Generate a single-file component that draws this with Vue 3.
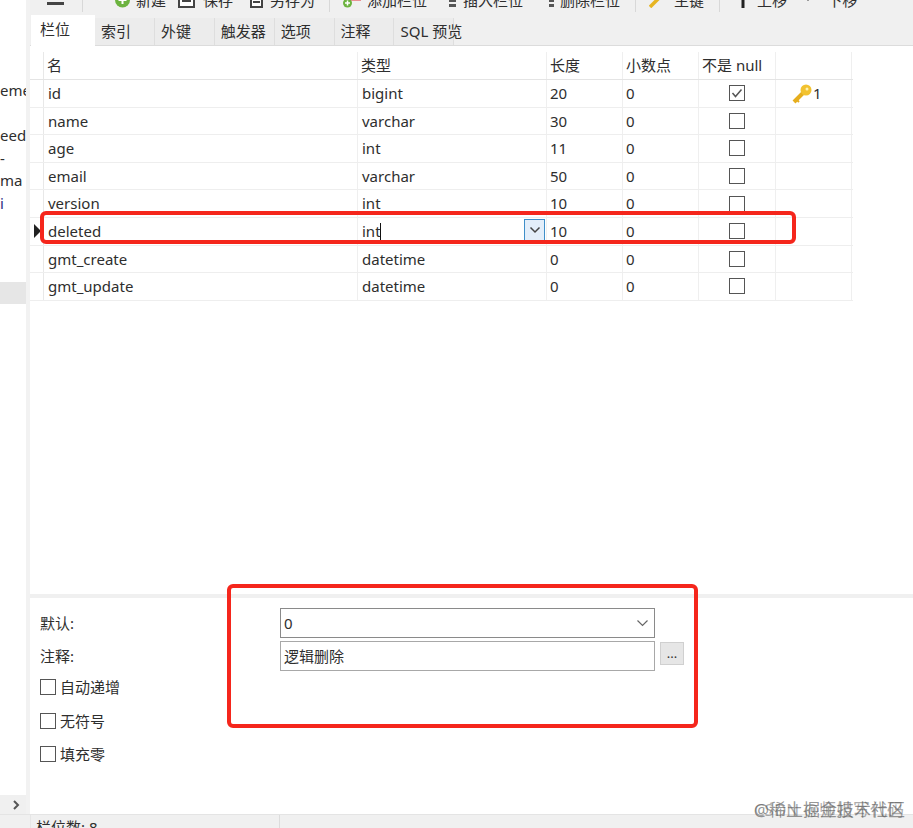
<script setup>
const sideRows = [
  { t: 'eme' }, { t: '' }, { t: 'eed', inset: true }, { t: '-', start: true }, { t: 'ma', inset: true }, { t: 'i', link: true },
  { t: '' }, { t: '' }, { t: '' }, { t: '', sel: true }
]
const tabs = ['索引', '外键', '触发器', '选项', '注释', 'SQL 预览']
const headers = ['名', '类型', '长度', '小数点', '不是 null', '']
const rows = [
  { name: 'id', type: 'bigint', len: '20', dec: '0', nn: true, key: '1' },
  { name: 'name', type: 'varchar', len: '30', dec: '0' },
  { name: 'age', type: 'int', len: '11', dec: '0' },
  { name: 'email', type: 'varchar', len: '50', dec: '0' },
  { name: 'version', type: 'int', len: '10', dec: '0' },
  { name: 'deleted', type: 'int', len: '10', dec: '0', cur: true },
  { name: 'gmt_create', type: 'datetime', len: '0', dec: '0' },
  { name: 'gmt_update', type: 'datetime', len: '0', dec: '0' }
]
const checks = ['自动递增', '无符号', '填充零']
</script>

<template>
  <div class="app">
    <div class="main">
      <aside class="side">
        <div class="side-list">
          <div v-for="(r, i) in sideRows" :key="i" class="side-row" :class="{ sel: r.sel, link: r.link, inset: r.inset, start: r.start }">{{ r.t }}</div>
        </div>
        <div class="side-scroll">
          <svg width="10" height="10" viewBox="0 0 10 10"><path d="M3 1l4 4-4 4" fill="none" stroke="#555" stroke-width="2"/></svg>
        </div>
      </aside>
      <div class="vsplit"></div>
      <section class="content">
        <div class="toolbar">
          <span class="menu-bar"></span>
          <span class="sep s1"></span>
          <span class="tool t-new">
            <svg width="15" height="16" viewBox="0 0 15 16"><circle cx="7.500" cy="8" r="7.500" fill="#6cb33f"/><path d="M7.500 4v8M3.500 8h8" stroke="#fff" stroke-width="2"/></svg>
            新建
          </span>
          <span class="tool t-save">
            <svg width="19" height="16" viewBox="0 0 19 16"><rect x="1" y="1" width="15" height="14" fill="#fff" stroke="#444" stroke-width="2"/><path d="M4 5h9M4 9h9" stroke="#444" stroke-width="2"/></svg>
            保存
          </span>
          <span class="tool t-as">
            <svg width="19" height="16" viewBox="0 0 19 16"><rect x="6" y="1" width="11" height="14" fill="#fff" stroke="#444" stroke-width="2"/><path d="M8 6h7M8 10h7M0 5h4" stroke="#444" stroke-width="2"/></svg>
            另存为
          </span>
          <span class="sep s2"></span>
          <span class="tool t-add">
            <svg width="18" height="16" viewBox="0 0 18 16"><rect x="8" y="5" width="10" height="3.500" fill="#e4313a"/><circle cx="4.500" cy="11" r="4.500" fill="#6cb33f"/><path d="M4.500 8.500v5M2 11h5" stroke="#fff" stroke-width="1.500"/></svg>
            添加栏位
          </span>
          <span class="tool t-ins">
            <svg width="15" height="16" viewBox="0 0 15 16"><circle cx="2" cy="4" r="1.500" fill="#e8a33c"/><rect x="7" y="2" width="7" height="3" fill="#555"/><rect x="7" y="7" width="7" height="3" fill="#555"/><rect x="7" y="12" width="7" height="3" fill="#555"/></svg>
            插入栏位
          </span>
          <span class="tool t-del">
            <svg width="19" height="16" viewBox="0 0 19 16"><circle cx="3" cy="4" r="2" fill="#e4313a"/><rect x="14" y="2" width="6" height="3" fill="#555"/><rect x="14" y="7" width="6" height="3" fill="#555"/><rect x="14" y="12" width="6" height="3" fill="#555"/></svg>
            删除栏位
          </span>
          <span class="sep s3"></span>
          <span class="tool t-key">
            <svg width="19" height="16" viewBox="0 0 19 16"><path d="M1 15L10 6" stroke="#e6b422" stroke-width="3.500"/><circle cx="11" cy="4" r="3.500" fill="#f0c330"/></svg>
            主键
          </span>
          <span class="sep s4"></span>
          <span class="tool t-up">
            <svg width="14" height="16" viewBox="0 0 14 16"><path d="M6 0v16" stroke="#222" stroke-width="3"/><path d="M1 7l5-6 5 6z" fill="#222"/></svg>
            上移
          </span>
          <span class="tool t-down">
            <svg width="19" height="16" viewBox="0 0 19 16"><path d="M6 0v6" stroke="#222" stroke-width="3"/><path d="M1 3l5 6 5-6z" fill="#222"/></svg>
            下移
          </span>
        </div>

        <div class="tabs">
          <div class="tab active">栏位</div>
          <div v-for="t in tabs" :key="t" class="tab">{{ t }}</div>
        </div>

        <div class="grid-pane">
          <div class="table">
            <div class="tr head">
              <div class="ind"></div>
              <div v-for="(h, i) in headers" :key="i" class="td">{{ h }}</div>
            </div>
            <div v-for="r in rows" :key="r.name" class="tr">
              <div class="ind">
                <span v-if="r.cur" class="arrow"></span>
              </div>
              <div class="td lead">{{ r.name }}</div>
              <div class="td lead">
                <span>{{ r.type }}</span><i v-if="r.cur" class="caret"></i>
                <span v-if="r.cur" class="drop">
                  <svg width="12" height="8" viewBox="0 0 12 8"><path d="M1.500 1.500L6 6l4.500-4.500" fill="none" stroke="#444" stroke-width="1.500"/></svg>
                </span>
              </div>
              <div class="td">{{ r.len }}</div>
              <div class="td">{{ r.dec }}</div>
              <div class="td center">
                <span class="box">
                  <svg v-if="r.nn" width="14" height="14" viewBox="0 0 14 14"><path d="M2.500 7l3 3.500 6-7" fill="none" stroke="#555" stroke-width="1.500"/></svg>
                </span>
              </div>
              <div class="td keycell">
                <template v-if="r.key">
                  <svg width="21" height="21" viewBox="0 0 21 21"><path d="M2 19L12 9" stroke="#e6ae1e" stroke-width="4"/><path d="M5 17l2 2" stroke="#e6ae1e" stroke-width="2"/><circle cx="14" cy="7" r="5.500" fill="#f2c230"/><circle cx="15" cy="6" r="1.500" fill="#fff3b0"/></svg>
                  <span>{{ r.key }}</span>
                </template>
              </div>
            </div>
          </div>
        </div>

        <div class="hsplit"></div>

        <div class="form">
          <div class="label">默认:</div>
          <div class="combo">
            <span>0</span>
            <svg width="11" height="7" viewBox="0 0 11 7"><path d="M.5.5l5 5 5-5" fill="none" stroke="#666" stroke-width="1.200"/></svg>
          </div>
          <div></div>
          <div class="label">注释:</div>
          <div class="combo plain"><span>逻辑删除</span></div>
          <button class="more">...</button>
          <div class="checks">
            <label v-for="c in checks" :key="c" class="check"><span class="box"></span>{{ c }}</label>
          </div>
        </div>
      </section>
    </div>
    <footer class="status"><div class="status-cell">栏位数: 8</div></footer>

    <div class="red red-a"></div>
    <div class="red red-b"></div>
    <div class="mark">@稀土掘金技术社区</div>
    <div class="mark mark2">CSDN @师姐写代码</div>
  </div>
</template>

<style scoped>
.app {
  position: relative;
  width: 913px;
  height: 828px;
  overflow: hidden;
  display: flex;
  flex-direction: column;
  background: #fff;
  color: #2e2e2e;
  font: 15px/20px "Noto Sans", "Noto Sans CJK SC", sans-serif;
}
.main { flex: 1; display: flex; min-height: 0; }
.side { width: 26px; display: flex; flex-direction: column; flex: none; overflow: hidden; }
.side-list { flex: 1; padding-top: 79px; }
.side-row {
  height: 22.5px;
  line-height: 22px;
  direction: rtl;
  unicode-bidi: plaintext;
  white-space: nowrap;
  text-align: right;
}
.side-row.inset { padding-right: 4px; }
.side-row.start { text-align: left; }
.side-row.link { color: #2b2b80; text-align: left; }
.side-row.sel { background: #e6e6e6; }
.side-scroll {
  height: 19px;
  background: #f0f0f0;
  display: flex;
  align-items: center;
  justify-content: flex-end;
  padding-right: 5px;
}
.vsplit { width: 4px; flex: none; background: #f2f2f2; }
.content { flex: 1; min-width: 0; display: flex; flex-direction: column; }

.toolbar {
  height: 15px;
  flex: none;
  display: flex;
  align-items: flex-start;
  background: #f0f0f0;
  overflow: hidden;
  white-space: nowrap;
}
.menu-bar { width: 17px; height: 3px; margin: 2px 0 0 17px; flex: none; background: #444; }
.sep { width: 1px; height: 12px; flex: none; background: #d8d8d8; }
.s1 { margin-left: 18px; }
.tool { display: inline-flex; flex: none; align-items: center; gap: 6px; margin-top: -10px; line-height: 20px; }
.t-new { margin-left: 32px; }
.t-save { margin-left: 12px; }
.t-as { margin-left: 12px; }
.s2 { margin-left: 14px; }
.t-add { margin-left: 13px; }
.t-ins { margin-left: 15px; }
.t-del { margin-left: 12px; }
.s3 { margin-left: 15px; }
.t-key { margin-left: 13px; }
.s4 { margin-left: 15px; }
.t-up { margin-left: 17px; }
.t-down { margin-left: 15px; }

.tabs {
  height: 31px;
  flex: none;
  display: flex;
  align-items: flex-end;
  background: #f0f0f0;
  border-bottom: 1px solid #dcdcdc;
  box-sizing: border-box;
  padding-left: 1px;
}
.tab {
  height: 27px;
  width: 59.9px;
  box-sizing: border-box;
  padding-left: 6px;
  line-height: 27px;
  background: #ececec;
  border-right: 1px solid #dedede;
  white-space: nowrap;
}
.tab.active {
  width: 64px;
  height: 31px;
  line-height: 28px;
  margin-bottom: -1px;
  padding-left: 9px;
  background: #fff;
  border-right: 0;
}

.grid-pane { flex: 1; min-height: 0; padding-top: 6px; }
.table { width: 823px; }
.tr { display: grid; grid-template-columns: 14px 314px 189px 76px 76px 77px 76px; height: 27.6px; border-bottom: 1px solid #eee; box-sizing: border-box; }
.tr.head { height: 28px; border-bottom-color: #e4e4e4; }
.ind { position: relative; border-right: 1px solid #e8e8e8; }
.arrow {
  position: absolute;
  top: 6px;
  left: 4px;
  border-left: 7px solid #222;
  border-top: 7px solid transparent;
  border-bottom: 7px solid transparent;
}
.td {
  position: relative;
  padding-left: 3px;
  line-height: 26px;
  border-right: 1px solid #efefef;
  white-space: nowrap;
  overflow: hidden;
}
.td.lead { padding-left: 4px; }
.center { display: flex; align-items: center; justify-content: center; padding-left: 0; }
.box {
  display: inline-flex;
  flex: none;
  box-sizing: border-box;
  width: 16px;
  height: 16px;
  border: 1px solid #555;
  background: #fff;
  align-items: center;
  justify-content: center;
}
.keycell { display: flex; align-items: center; padding-left: 16px; }
.caret { display: inline-block; width: 1px; height: 18px; margin-left: -1px; background: #111; vertical-align: -4px; }
.drop {
  position: absolute;
  right: 1px;
  top: 1px;
  width: 21px;
  height: 22px;
  box-sizing: border-box;
  background: #e3eefa;
  border: 1px solid #3f8fc9;
  display: flex;
  align-items: center;
  justify-content: center;
}

.hsplit { height: 4px; flex: none; background: #f0f0f0; }
.form {
  height: 216px;
  flex: none;
  box-sizing: border-box;
  padding: 10px 0 0 10px;
  display: grid;
  grid-template-columns: 240px 375px 30px;
  grid-template-rows: 33px 33px auto;
  align-content: start;
}
.label { height: 30px; line-height: 30px; }
.combo {
  height: 30px;
  box-sizing: border-box;
  border: 1px solid #8a8a8a;
  padding: 0 6px 0 3px;
  display: flex;
  align-items: center;
  justify-content: space-between;
  background: #fff;
}
.combo.plain { border-color: #a8a8a8; }
.more {
  width: 24px;
  height: 23px;
  margin: 1px 0 0 5px;
  padding: 0 0 2px;
  border: 1px solid #d0d0d0;
  background: #e6e6e6;
  color: #333;
  font: 13px/20px "Noto Sans", sans-serif;
}
.checks { grid-column: 1 / -1; display: flex; flex-direction: column; gap: 7.5px; }
.check { height: 26px; display: flex; align-items: center; gap: 4px; }

.status { height: 14px; flex: none; background: #f0f0f0; border-top: 1px solid #e4e4e4; box-sizing: border-box; overflow: hidden; padding-left: 30px; }
.status-cell { width: 250px; height: 14px; padding-left: 5px; line-height: 24px; border-right: 1px solid #dcdcdc; border-left: 1px solid #e6e6e6; box-sizing: border-box; }

.red { position: absolute; border: 4px solid #f5261c; border-radius: 6px; box-sizing: border-box; pointer-events: none; }
.red-a { left: 40px; top: 211px; width: 756px; height: 33px; }
.red-b { left: 227px; top: 584px; width: 471px; height: 144px; }
.mark { position: absolute; right: 8px; top: 800px; font-size: 17px; color: rgba(90, 90, 90, 0.65); white-space: nowrap; }
.mark2 { right: 9px; color: rgba(90, 90, 90, 0.5); }
</style>
